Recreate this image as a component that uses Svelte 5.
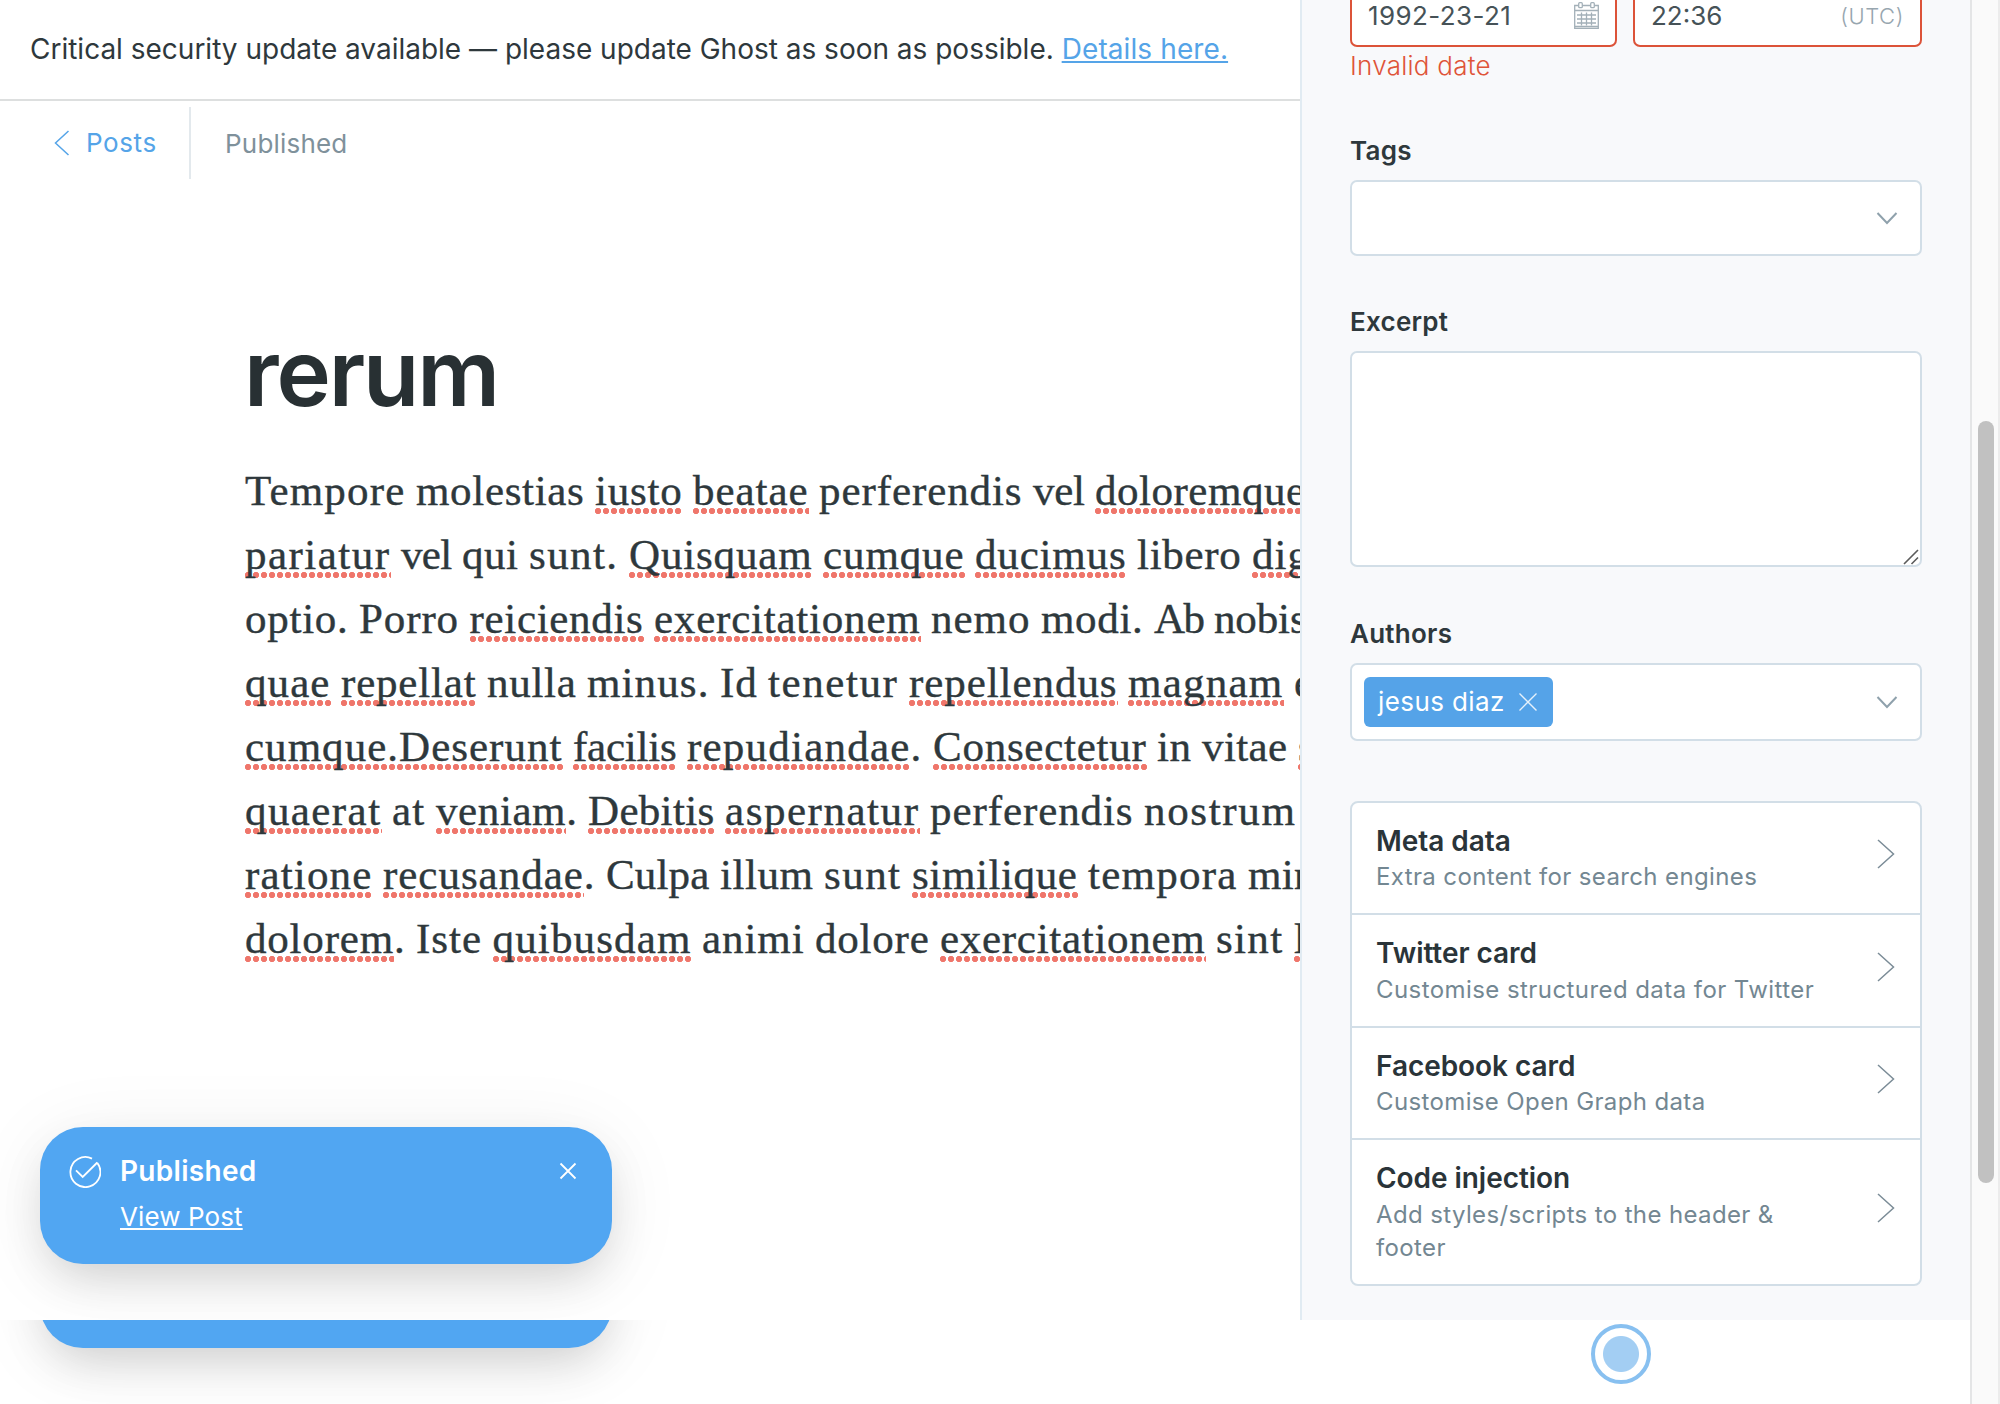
<script>
  // Each entry is [start offset on the line, word]; "*" marks a word the
  // spell checker does not know, "|" separates it from its punctuation.
  const bodyFont = '43px "Liberation Serif"';
  const wordGap = 10.5;
  const lines = [
    [[0, 'Tempore'], [171, 'molestias'], [350, '*iusto'], [448, '*beatae'], [574, 'perferendis'], [788, 'vel'], [850, '*doloremque'], [1071, '']],
    [[0, '*pariatur'], [156, 'vel'], [217, 'qui'], [284, 'sunt.'], [384, '*Quisquam'], [578, '*cumque'], [730, '*ducimus'], [892, 'libero'], [1007, '*dignissimos'], [1234, '']],
    [[0, 'optio.'], [114, 'Porro'], [224.5, '*reiciendis'], [409, '*exercitationem'], [686, 'nemo'], [796, 'modi.'], [909, 'Ab'], [969, 'nobis'], [1072, '']],
    [[0, '*quae'], [96, '*repellat'], [242, 'nulla'], [342, 'minus.'], [475, 'Id'], [523, 'tenetur'], [664, '*repellendus'], [883, '*magnam'], [1049, 'est'], [1110, '']],
    [[0, '*cumque.Deserunt'], [328, '*facilis'], [442, '*repudiandae|.'], [688, '*Consectetur'], [912, 'in'], [957, 'vitae'], [1053, '*sit'], [1100, '']],
    [[0, '*quaerat'], [147, 'at'], [191, '*veniam|.'], [343, '*Debitis'], [480, '*aspernatur'], [685, 'perferendis'], [899, 'nostrum'], [1062, '']],
    [[0, '*ratione'], [138, '*recusandae|.'], [361, 'Culpa'], [475, 'illum'], [579, 'sunt'], [667, '*similique'], [843, 'tempora'], [1003, 'minus'], [1120, '']],
    [[0, '*dolorem|.'], [171, 'Iste'], [247.5, '*quibusdam'], [457, 'animi'], [570, 'dolore'], [695, '*exercitationem'], [971, 'sint'], [1049, '*la'], [1094, '']]
  ];

  const measure = document.createElement('canvas').getContext('2d');
  measure.font = bodyFont;

  const paragraph = lines.map((line) =>
    line.slice(0, -1).map(([start, raw], i) => {
      const wrong = raw.startsWith('*');
      const [text, tail = ''] = raw.replace('*', '').split('|');
      const advance = line[i + 1][0] - start;
      const glyphs = text + tail;
      const tracking = (advance - wordGap - measure.measureText(glyphs).width) / glyphs.length;
      return { text, tail, wrong, advance, tracking };
    })
  );

  const sections = [
    { title: 'Meta data', detail: 'Extra content for search engines' },
    { title: 'Twitter card', detail: 'Customise structured data for Twitter' },
    { title: 'Facebook card', detail: 'Customise Open Graph data' },
    { title: 'Code injection', detail: 'Add styles/scripts to the header & footer' }
  ];
</script>

{#snippet chevronDown()}
  <svg class="down" width="22" height="14" viewBox="0 0 22 14"><path d="M1.5 2 11 12 20.5 2" /></svg>
{/snippet}

<div class="page">
  <div class="main">
    <div class="app">
      <div class="editor">
        <div class="banner">
          Critical security update available — please update Ghost as soon as possible.&nbsp;<a href="#details">Details here.</a>
        </div>
        <header>
          <a class="back" href="#posts">
            <svg width="16" height="26" viewBox="0 0 16 26"><path d="M14.5 1 1.5 13l13 12" /></svg>
            <span>Posts</span>
          </a>
          <span class="status">Published</span>
        </header>
        <article>
          <h1>rerum</h1>
          <div class="copy">
            {#each paragraph as line}
              <div class="line">
                {#each line as w}
                  <span class="word" style="width:{w.advance}px;letter-spacing:{w.tracking}px"><span class:wrong={w.wrong}>{w.text}</span>{w.tail}</span>
                {/each}
              </div>
            {/each}
          </div>
        </article>
      </div>

      <aside>
        <div class="dates">
          <div class="input date">
            <span>1992-23-21</span>
            <svg width="25" height="27" viewBox="0 0 25 27">
              <path d="M4.5 3.5H.7v22.8h23.6V3.5h-3.8M8.5 3.5h8M.7 8.5h23.6M.7 24.5h23.6" />
              <path d="M3 13h19M3 17h19M3 21h19M7.5 10.5v13M12.5 10.5v13M17.5 10.5v13" />
              <rect x="4.7" y=".7" width="3.6" height="5" rx="1" /><rect x="16.7" y=".7" width="3.6" height="5" rx="1" />
            </svg>
          </div>
          <div class="input time"><span>22:36</span><small>(UTC)</small></div>
        </div>
        <p class="error">Invalid date</p>

        <div class="label first">Tags</div>
        <div class="input select">{@render chevronDown()}</div>

        <div class="label">Excerpt</div>
        <div class="input area">
          <svg width="16" height="16" viewBox="0 0 16 16"><path d="M1 15 15 1M8.5 15 15 8.5" /></svg>
        </div>

        <div class="label second">Authors</div>
        <div class="input select authors">
          <span class="chip">jesus diaz
            <svg width="20" height="20" viewBox="0 0 20 20"><path d="m1.500 1.500 17 17m0-17-17 17" /></svg>
          </span>
          {@render chevronDown()}
        </div>

        <ul>
          {#each sections as s}
            <li>
              <div class="text"><b>{s.title}</b><span>{s.detail}</span></div>
              <svg width="18" height="30" viewBox="0 0 18 30"><path d="M1 1l15.500 14L1 29" /></svg>
            </li>
          {/each}
        </ul>
      </aside>

      <div class="toast">
        <svg class="check" width="34" height="34" viewBox="0 0 34 34">
          <path d="M25 4.600A15 15 0 1 0 30.200 8.800" /><path d="m9 16.300 6.700 6.600L30.300 8.500" />
        </svg>
        <div class="message"><b>Published</b><a href="#view">View Post</a></div>
        <svg class="close" width="18" height="18" viewBox="0 0 18 18"><path d="m1.500 1.500 15 15m0-15-15 15" /></svg>
      </div>
    </div>

    <div class="footer">
      <div class="toast behind"></div>
      <div class="target"></div>
    </div>
  </div>
  <div class="track"><div class="thumb"></div></div>
</div>

<style>
  :global(body) { background: #fff; overflow: hidden; }
  .page {
    display: flex; width: 2000px; height: 1404px; overflow: hidden;
    font: 400 26px/34px Inter, 'Liberation Sans', sans-serif; color: #2e383c;
  }
  .page * { box-sizing: border-box; }
  svg { fill: none; stroke: currentColor; flex: none; display: block; }
  .main { width: 1970px; }
  .app { position: relative; display: flex; height: 1320px; overflow: hidden; }
  .editor { width: 1300px; overflow: hidden; white-space: nowrap; }

  .banner {
    height: 101px; border-bottom: 2px solid #dddfdf; padding: 0 0 0 30px;
    font-size: 28px; line-height: 99px; letter-spacing: -.005px;
  }
  .banner a { color: #55a4e8; letter-spacing: .1px; text-decoration: underline 2px; text-underline-offset: 2px; text-decoration-skip-ink: none; }
  header { display: flex; align-items: center; height: 72px; margin-top: 6px; color: #7f919b; }
  .back {
    display: flex; align-items: center; gap: 16px; width: 191px; height: 72px; padding-left: 54px;
    border-right: 2px solid #e3e9ed; color: #55a4e8; text-decoration: none; letter-spacing: .6px;
  }
  .back svg { stroke-width: 1.5; }
  .status { padding: 2px 0 0 34px; letter-spacing: .2px; }
  article { padding: 139px 0 0 245px; }
  h1 { margin: 0 0 31px -1px; font-size: 92px; line-height: 110px; font-weight: 600; letter-spacing: -2.1px; color: #283033; }
  .copy { font: 43px/64px 'Liberation Serif', serif; -webkit-text-stroke: .4px currentColor; }
  .line { display: flex; height: 64px; }
  .word { flex: none; }
  .wrong { background: radial-gradient(circle at 3px 3px, #ef766b 2.8px, transparent 3.5px) 0 100% / 8px 6px repeat-x; }

  aside { width: 670px; padding: 0 48px; background: #f8f9fb; border-left: 2px solid #e1ebf2; }
  .input { display: flex; align-items: center; justify-content: space-between; background: #fff; border: 2px solid #d2dee7; border-radius: 7px; }
  .dates { display: flex; gap: 16px; margin-top: -17px; }
  .date, .time { height: 64px; border-color: #dc5339; padding: 0 16px; color: #465257; }
  .date { width: 267px; letter-spacing: .4px; }
  .date span, .time span { padding-top: 2px; }
  .time { flex: 1; }
  .date svg { color: #a3b0b8; stroke-width: 1.3; }
  small { font-size: 22px; font-weight: 300; color: #97a6af; letter-spacing: .6px; padding-top: 1px; }
  .error { margin: 5px 0 0; line-height: 28px; font-weight: 300; letter-spacing: .25px; color: #df5438; }
  .label { height: 32px; margin: 50px 0 13px; line-height: 32px; font-weight: 600; letter-spacing: .25px; }
  .label.first { margin-top: 55px; }
  .label.second { margin-top: 51px; }
  .select { height: 76px; padding: 0 22px 0 12px; justify-content: flex-end; }
  .down { color: #8fa1ac; stroke-width: 2; }
  .area { height: 216px; align-items: flex-end; justify-content: flex-end; padding: 0 1px 0 0; }
  .area svg { color: #5c5c5c; stroke-width: 1.6; }
  .authors { height: 78px; justify-content: space-between; }
  .chip { display: flex; align-items: center; gap: 13px; height: 50px; width: 189px; padding-left: 14px; background: #55a3e8; border-radius: 6px; color: #fff; letter-spacing: .4px; }
  .chip svg { stroke-width: 1.4; opacity: .85; }

  ul { list-style: none; margin: 60px 0 0; padding: 0; background: #fff; border: 2px solid #d2dee7; border-radius: 8px; }
  li { display: flex; align-items: center; justify-content: space-between; padding: 20px 25px 20px 24px; }
  li + li { border-top: 2px solid #d2dee7; }
  .text { width: 450px; }
  .text b { display: block; font-size: 28px; line-height: 36px; font-weight: 600; color: #2a3439; letter-spacing: -.05px; }
  .text span { display: block; padding-top: 1px; font-size: 24px; line-height: 33px; letter-spacing: .37px; color: #738792; }
  li:nth-child(even) span { padding-top: 2px; }
  li:nth-child(2) span { letter-spacing: .43px; }
  li svg { color: #7b8c97; stroke-width: 1.5; margin-bottom: 8px; }

  .toast {
    position: absolute; left: 40px; top: 1127px; width: 572px; height: 137px; border-radius: 43px;
    display: flex; align-items: flex-start; padding: 27px 35px 0 27px; background: #51a6f2; color: #fff;
    box-shadow: 0 10px 80px rgba(0, 0, 0, .07), 0 20px 46px -8px rgba(0, 0, 0, .15);
  }
  .check { stroke-width: 1.8; }
  .message { flex: 1; padding-left: 19px; }
  .message b { display: block; margin: 0 0 12px; font-size: 28px; font-weight: 600; letter-spacing: .3px; }
  .message a { color: inherit; letter-spacing: .1px; text-decoration: underline 2px; text-underline-offset: 2px; }
  .close { margin-top: 8px; stroke-width: 1.8; }
  .footer { position: relative; height: 84px; overflow: hidden; }
  .behind { top: -109px; }
  .target {
    position: absolute; left: 1591px; top: 4px; width: 60px; height: 60px; border: 4px solid #88c0f0; border-radius: 50%;
    background: radial-gradient(circle, #a3cef3 17.5px, #fff 18.5px);
  }
  .track { flex: 1; padding: 421px 0 0 6px; background: #fafafa; border-left: 2px solid #e4e5e6; border-right: 2px solid #ececec; }
  .thumb { width: 16px; height: 762px; border-radius: 8px; background: #c1c1c1; }
</style>
